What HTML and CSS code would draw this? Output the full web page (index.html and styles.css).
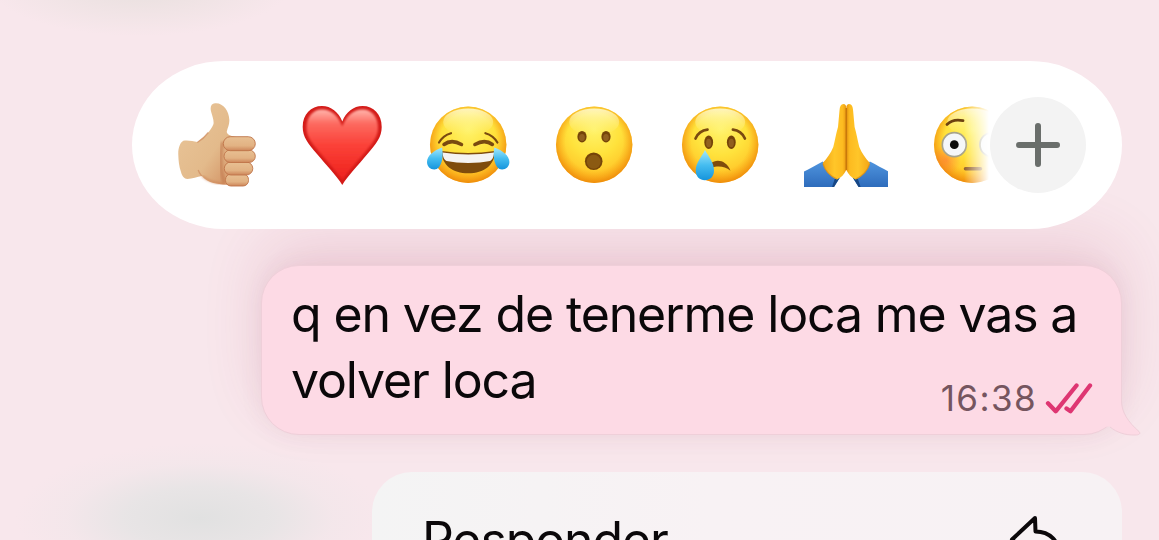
FILE: index.html
```
<!DOCTYPE html>
<html lang="es">
<head>
<meta charset="utf-8">
<title>Chat</title>
<link rel="stylesheet" href="styles.css">
</head>
<body>
<svg class="defs" width="0" height="0" aria-hidden="true">
    <defs>
        <radialGradient id="faceFill" cx=".5" cy=".3" r=".75">
            <stop offset="0" stop-color="#fff36a"/>
            <stop offset=".45" stop-color="#ffe23c"/>
            <stop offset="1" stop-color="#ffb41c"/>
        </radialGradient>
        <radialGradient id="faceEdge" cx=".5" cy=".46" r=".55">
            <stop offset=".68" stop-color="#f9a012" stop-opacity="0"/>
            <stop offset="1" stop-color="#ea8106" stop-opacity=".9"/>
        </radialGradient>
        <linearGradient id="faceShine" x1="0" y1="0" x2="0" y2="1">
            <stop offset="0" stop-color="#fffbd6" stop-opacity=".85"/>
            <stop offset="1" stop-color="#fff48a" stop-opacity="0"/>
        </linearGradient>
        <linearGradient id="tearFill" x1="0" y1="0" x2="0" y2="1">
            <stop offset="0" stop-color="#a5e8fb"/>
            <stop offset=".5" stop-color="#45bdf0"/>
            <stop offset="1" stop-color="#1594dc"/>
        </linearGradient>
        <linearGradient id="heartFill" x1="0" y1="0" x2="0" y2="1">
            <stop offset="0" stop-color="#ffb5ac"/>
            <stop offset=".2" stop-color="#fd6a60"/>
            <stop offset=".5" stop-color="#fb4239"/>
            <stop offset="1" stop-color="#ee211c"/>
        </linearGradient>
        <linearGradient id="skin" x1="0" y1="0" x2="1" y2="1">
            <stop offset="0" stop-color="#e9c69a"/>
            <stop offset=".6" stop-color="#e3ba8b"/>
            <stop offset="1" stop-color="#cf8b5d"/>
        </linearGradient>
        <linearGradient id="finger" x1="0" y1="0" x2="0" y2="1">
            <stop offset="0" stop-color="#e8c093"/>
            <stop offset=".65" stop-color="#e2b283"/>
            <stop offset="1" stop-color="#cd8559"/>
        </linearGradient>
        <linearGradient id="handFill" x1="0" y1="0" x2="1" y2="0">
            <stop offset="0" stop-color="#f3a516"/>
            <stop offset=".5" stop-color="#ffc629"/>
            <stop offset=".85" stop-color="#fdbb20"/>
            <stop offset="1" stop-color="#e89711"/>
        </linearGradient>
        <linearGradient id="sleeve" x1="0" y1="0" x2="0" y2="1">
            <stop offset="0" stop-color="#4f94de"/>
            <stop offset="1" stop-color="#2e6cbc"/>
        </linearGradient>
        <radialGradient id="blush">
            <stop offset="0" stop-color="#ff7438" stop-opacity=".6"/>
            <stop offset="1" stop-color="#ff7438" stop-opacity="0"/>
        </radialGradient>
        <clipPath id="faceClip"><circle cx="42.2" cy="41.8" r="38.2"/></clipPath>
        <filter id="soft"><feGaussianBlur stdDeviation="1.300"/></filter>
        <g id="face">
            <circle cx="42.2" cy="41.8" r="38.2" fill="url(#faceFill)"/>
            <circle cx="42.2" cy="41.8" r="38.2" fill="url(#faceEdge)"/>
            <ellipse cx="42.2" cy="19" rx="25" ry="13.500" fill="url(#faceShine)"/>
        </g>
    </defs>
</svg>

<main class="chat">
    <div class="reactions">
        <div class="emojis">
            <svg class="emoji" viewBox="0 0 84 84">
                <path d="M41 .3C37 .8 35.8 4 37.2 9c1.200 4.500 2.800 8 2.300 12-2.500 7-9.500 13-16.200 18C19 38 14 37 9.300 37.700 5.500 40 4 46 4.300 52c.2 6 .7 11 2.700 17 1 4 3.300 7 6.300 7 5-.3 10-2 14.400-3C31 76.500 35 79 39.300 80c5 1.300 11 1.500 17 2l6-48c-4-.8-8.500-1.500-9.600-5 .9-4.500 3-7.500 2.600-12.500C55 8 49-.5 41 .3z" fill="url(#skin)"/>
                <path d="M49 39c-3 10-3.500 28 1.500 41" fill="none" stroke="#c07449" stroke-width="4" opacity=".55" filter="url(#soft)"/>
                <path d="M28 73c7 6 14 7 23 8" fill="none" stroke="#c9794b" stroke-width="2" opacity=".6" filter="url(#soft)"/>
                <g fill="url(#finger)" stroke="#bf754a" stroke-width=".9">
                    <rect x="51.500" y="71" width="23" height="12" rx="5.500"/>
                    <rect x="50.300" y="59" width="28.500" height="13" rx="6.500"/>
                    <rect x="50" y="47" width="31.300" height="12.500" rx="6.200"/>
                    <rect x="49.300" y="33.700" width="32" height="14" rx="7"/>
                </g>
                <path d="M23.300 39.500c5-3 8-6 11-10M27.700 73c-1.500-2-2.500-3-3.500-6" fill="none" stroke="#cb8459" stroke-width="1.300" opacity=".6"/>
            </svg>
            <svg class="emoji" viewBox="0 0 84 84">
                <path d="M42.300 82C37 73 26 62 17 51 8 40.500 2.700 34 2.700 24 2.700 11 11 3 22 3c9 0 16.500 6 20.300 15.500C46 9 53.500 3 62.500 3c11 0 19.200 8 19.200 21 0 10-5.300 16.500-14.300 27C58.500 62 47.500 73 42.300 82z" fill="#d41c19"/>
                <path d="M42.300 77C37 69 28 59.500 20 50 11 39 6.500 33.500 6.500 24.500 6.500 14 13 6.500 22 6.500c9.500 0 16.800 7 20.300 17 3.500-10 10.700-17 20.200-17 9 0 15.500 7.500 15.500 18 0 9-4.500 14.500-13.500 25.500C56.500 59.500 47.500 69 42.300 77z" fill="url(#heartFill)" filter="url(#soft)"/>
            </svg>
            <svg class="emoji" viewBox="0 0 84 84">
                <use href="#face"/>
                <g fill="none" stroke="#7a4a10" stroke-linecap="round">
                    <path d="M13 39.500q4-7 12-9.300M71.400 39.500q-4-7-12-9.300" stroke-width="2.200"/>
                    <path d="M18 41.500q7.500-5.800 17.500 0M66.400 41.500q-7.500-5.800-17.500 0" stroke-width="3.500"/>
                </g>
                <path d="M15.500 48q26.700 4 53.400 0C69 62 58 70.300 42.300 70.300S15.600 62 15.500 48z" fill="#7f4c0c"/>
                <path d="M16.500 49.500q25.800 4 51.600 0c-.3 4-1.700 7.500-4.100 8.500-12 2.500-31.500 2.500-43.400 0-2.400-1-3.800-4.500-4.100-8.500z" fill="#f5f3f1"/>
                <path d="M16 44.500c-8 3-15 8-15 14.500 0 4.500 3.300 7.500 7.300 7.500C15.500 66.500 18 54 16 44.500zM68.400 44.500c8 3 15 8 15 14.500 0 4.500-3.300 7.500-7.300 7.500-7.200 0-9.700-12.500-7.700-22z" fill="url(#tearFill)"/>
            </svg>
            <svg class="emoji" viewBox="0 0 84 84">
                <use href="#face"/>
                <g fill="#754409">
                    <ellipse cx="30" cy="33.700" rx="4.600" ry="5.800"/>
                    <ellipse cx="54" cy="33.700" rx="4.600" ry="5.800"/>
                    <circle cx="41.700" cy="58.300" r="8.800"/>
                </g>
                <circle cx="41.700" cy="58.800" r="7" fill="#8b5a12"/>
                <g fill="#91601f">
                    <ellipse cx="30" cy="34.500" rx="2.800" ry="3.600"/>
                    <ellipse cx="54" cy="34.500" rx="2.800" ry="3.600"/>
                </g>
            </svg>
            <svg class="emoji" viewBox="0 0 84 84">
                <use href="#face"/>
                <path d="M17.500 35.500q3.500-7.800 12-8.800M66.900 35.500q-3.500-7.800-12-8.800" fill="none" stroke="#7a4a10" stroke-width="2.700" stroke-linecap="round"/>
                <path d="M33 60.500c5-5 15.500-3.500 19.500 7.300-6-4.500-12-5.300-19.500-2.800z" fill="#7f4c0c"/>
                <g fill="#754409">
                    <ellipse cx="30.700" cy="39.300" rx="4.400" ry="6.700"/>
                    <ellipse cx="53.300" cy="39.300" rx="4.400" ry="6.700"/>
                </g>
                <g fill="#91601f">
                    <ellipse cx="30.700" cy="40" rx="2.600" ry="4.200"/>
                    <ellipse cx="53.300" cy="40" rx="2.600" ry="4.200"/>
                </g>
                <path d="M27 47c3.500 6.500 9 12.500 9 20.500 0 6-4 9.800-9.100 9.800s-9.200-3.800-9.200-9.800C17.700 59.500 24 53.500 27 47z" fill="url(#tearFill)"/>
            </svg>
            <svg class="emoji" viewBox="0 0 84 84">
                <g id="palm">
                    <path d="M0 68.500C5 66 12 62 18.700 58.500L36 74.500 30 84H0z" fill="url(#sleeve)"/>
                    <path d="M30 84l5.500-9-3.500-3-4 12z" fill="#174784"/>
                    <path d="M39.500 1C36.800 1.300 35.800 3.500 35.500 7.500L34 24c-2 7-3 13-4.700 20-2.500 6-6.300 11.500-10.600 16 1 6 7 13.500 14.300 16.500 4.500-2 7-5 9.300-9.500V5C42.200 2 41.200 1 39.500 1z" fill="url(#handFill)"/>
                    <path d="M19 61c2 6 7 12 14 15" fill="none" stroke="#d88a12" stroke-width="1.200" opacity=".7"/>
                </g>
                <use href="#palm" transform="matrix(-1 0 0 1 84.600 0)"/>
                <path d="M42.300 5v62" fill="none" stroke="#c9780b" stroke-width="1.600"/>
            </svg>
            <svg class="emoji" viewBox="0 0 84 84">
                <use href="#face"/>
                <circle cx="16" cy="57" r="15" fill="url(#blush)" clip-path="url(#faceClip)"/>
                <path d="M17 21.500q6-6 16-3.800" fill="none" stroke="#6d4210" stroke-width="2.800" stroke-linecap="round"/>
                <circle cx="24.300" cy="41.700" r="12" fill="#f5f7f9" stroke="#a8a48c" stroke-width="1.700"/>
                <circle cx="62" cy="41.700" r="12" fill="#f5f7f9" stroke="#a8a48c" stroke-width="1.700"/>
                <circle cx="24.300" cy="41.700" r="4.400" fill="#0c0c0c"/>
                <path d="M35.500 65.700h15" fill="none" stroke="#93602a" stroke-width="3.500" stroke-linecap="round"/>
            </svg>
        </div>
        <button class="more" aria-label="Más reacciones">
            <svg viewBox="0 0 44 44"><path d="M22 3v38M3 22h38"/></svg>
        </button>
    </div>

    <div class="bubble">
        <p class="message">q en vez de tenerme loca me vas a<br>volver loca</p>
        <div class="meta">
            <span class="time">16:38</span>
            <svg class="ticks" viewBox="0 0 48 32"><path d="M3 21.300l7.700 8L31.500 3.500M21.500 26.500l4 2.800L45 3.500"/></svg>
        </div>
        <svg class="tail" viewBox="0 0 44 40">
            <path class="tail-fill" d="M6 0h17.500v4C23.500 15 30 25 41 34.500c2 2.300 0 3.500-4 3.500-10 .3-18-2.500-25-8.500L0 30z"/>
            <path class="tail-line" d="M23.500 0v4C23.500 15 30 25 41 34.500c2 2.300 0 3.500-4 3.500-10 .3-18-2.500-25-8"/>
        </svg>
    </div>

    <div class="menu">
        <div class="menu-item">
            <span>Responder</span>
            <svg class="reply" viewBox="0 0 54 48"><path d="M26 4L3 25.500 26 46V33.500c10 0 18 2 25 9C50 27 41 17.500 26.500 17.500z"/></svg>
        </div>
    </div>
</main>
</body>
</html>
```
FILE: styles.css
```
* {
    box-sizing: border-box;
}

body {
    margin: 0;
    height: 540px;
    overflow: hidden;
    background:
        radial-gradient(ellipse 185px 75px at 200px 518px, #e1e1e1 0%, rgba(228, 228, 228, .8) 40%, rgba(236, 230, 232, .35) 72%, rgba(244, 232, 236, 0) 100%),
        radial-gradient(ellipse 150px 50px at 140px -14px, #e8e0de 0%, rgba(240, 229, 231, 0) 100%),
        #f8e7ec;
    font-family: Inter, "Liberation Sans", sans-serif;
    color: #0b080a;
}

.defs {
    display: block;
}

.chat {
    display: flex;
    flex-direction: column;
    align-items: flex-end;
    height: 540px;
    padding: 61px 37px 0 0;
    overflow: hidden;
}

.reactions {
    position: relative;
    z-index: 1;
    display: flex;
    flex: none;
    align-items: center;
    width: 990px;
    height: 168px;
    padding: 0 36px 0 42px;
    background: #fff;
    border-radius: 92px / 84px;
}

.emojis {
    display: flex;
    flex: 1;
    gap: 42px;
    overflow: hidden;
    -webkit-mask-image: linear-gradient(to right, #000 790px, transparent 815px);
    mask-image: linear-gradient(to right, #000 790px, transparent 815px);
}

.emoji {
    flex: none;
    width: 84px;
    height: 84px;
}

.more {
    display: flex;
    flex: none;
    align-items: center;
    justify-content: center;
    width: 96px;
    height: 96px;
    padding: 0;
    border: 0;
    border-radius: 50%;
    background: #f3f3f3;
}

.more svg {
    width: 44px;
    height: 44px;
    fill: none;
    stroke: #6a6e6b;
    stroke-width: 6;
    stroke-linecap: round;
}

.bubble {
    position: relative;
    flex: none;
    width: 861px;
    height: 170px;
    margin: 36px 0 0;
    padding: 15px 28px 0 29px;
    background: #fddae5;
    border: 1px solid #efcfd9;
    border-radius: 38px;
    box-shadow: 0 -26px 60px rgba(185, 60, 100, .14), 0 0 24px rgba(120, 60, 80, .07);
}

.message {
    margin: 0;
    font-size: 50px;
    line-height: 66px;
    letter-spacing: -1.13px;
    white-space: nowrap;
}

.meta {
    display: flex;
    align-items: center;
    justify-content: flex-end;
    gap: 8px;
    margin-top: -33px;
}

.time {
    font-size: 35px;
    line-height: 36px;
    letter-spacing: 1.4px;
    color: #75555f;
}

.ticks {
    width: 48px;
    height: 32px;
    fill: none;
    stroke: #de3672;
    stroke-width: 4.300;
    stroke-linecap: round;
    stroke-linejoin: round;
}

.tail {
    position: absolute;
    right: -21px;
    bottom: -3px;
    width: 44px;
    height: 40px;
}

.tail-fill {
    fill: #fddae5;
}

.tail-line {
    fill: none;
    stroke: #efcfd9;
}

.menu {
    position: relative;
    flex: none;
    width: 750px;
    height: 200px;
    margin-top: 37px;
    padding: 37px 59px 0 50px;
    background: linear-gradient(to right, #f4f4f4, #f8f2f4 45%, #f7f2f4);
    border-radius: 40px;
}

.menu-item {
    display: flex;
    justify-content: space-between;
    font-size: 50px;
    line-height: 62px;
    letter-spacing: -1.1px;
}

.reply {
    width: 54px;
    height: 48px;
    margin-top: 5px;
    fill: none;
    stroke: #0b080a;
    stroke-width: 4;
    stroke-linejoin: round;
}
```
